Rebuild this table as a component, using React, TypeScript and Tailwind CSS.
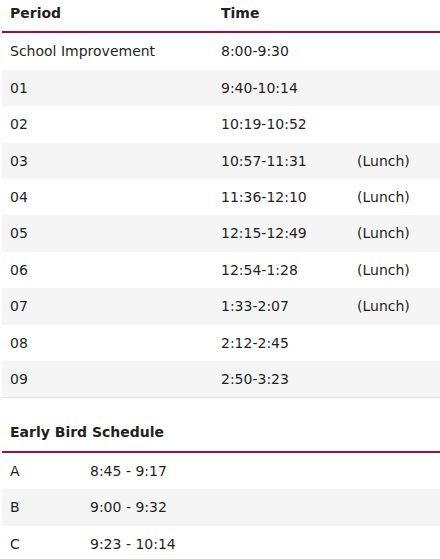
const periods = [
  { period: "School Improvement", time: "8:00-9:30", note: "" },
  { period: "01", time: "9:40-10:14", note: "" },
  { period: "02", time: "10:19-10:52", note: "" },
  { period: "03", time: "10:57-11:31", note: "(Lunch)" },
  { period: "04", time: "11:36-12:10", note: "(Lunch)" },
  { period: "05", time: "12:15-12:49", note: "(Lunch)" },
  { period: "06", time: "12:54-1:28", note: "(Lunch)" },
  { period: "07", time: "1:33-2:07", note: "(Lunch)" },
  { period: "08", time: "2:12-2:45", note: "" },
  { period: "09", time: "2:50-3:23", note: "" },
];

const earlyBird = [
  { label: "A", time: "8:45 - 9:17" },
  { label: "B", time: "9:00 - 9:32" },
  { label: "C", time: "9:23 - 10:14" },
];

const App = () => {
  return (
    <div className="min-h-[559px] bg-white pl-[2px] text-[14px] leading-[20.4px] text-[#1f1f1f] [font-family:'DejaVu_Sans',Verdana,sans-serif]">
      <table className="w-full table-fixed border-collapse">
        <thead>
          <tr className="border-b-2 border-[#a30d3a]">
            <th className="w-[211px] px-2 pt-[3px] pb-[8px] text-left font-bold">Period</th>
            <th className="w-[136px] px-2 pt-[3px] pb-[8px] text-left font-bold">Time</th>
            <th className="px-2 pt-[3px] pb-[8px]" />
          </tr>
        </thead>
        <tbody>
          {periods.map((row, i) => (
            <tr
              key={row.period}
              className={`${i % 2 === 1 ? "bg-[#f5f5f5]" : "bg-white"} ${
                i === periods.length - 1 ? "border-b border-[#e4e4e4]" : ""
              }`}
            >
              <td className="px-2 py-2 whitespace-nowrap">{row.period}</td>
              <td className="px-2 py-2">{row.time}</td>
              <td className="px-2 py-2">{row.note}</td>
            </tr>
          ))}
        </tbody>
      </table>

      <table className="mt-4 w-full table-fixed border-collapse">
        <thead>
          <tr className="border-b-2 border-[#a30d3a]">
            <th className="w-[80px] px-2 py-2 text-left font-bold whitespace-nowrap">
              Early Bird Schedule
            </th>
            <th className="px-2 py-2" />
          </tr>
        </thead>
        <tbody>
          {earlyBird.map((row, i) => (
            <tr key={row.label} className={i % 2 === 1 ? "bg-[#f5f5f5]" : "bg-white"}>
              <td className="px-2 py-2">{row.label}</td>
              <td className="px-2 py-2">{row.time}</td>
            </tr>
          ))}
        </tbody>
      </table>
    </div>
  );
};

export default App;
